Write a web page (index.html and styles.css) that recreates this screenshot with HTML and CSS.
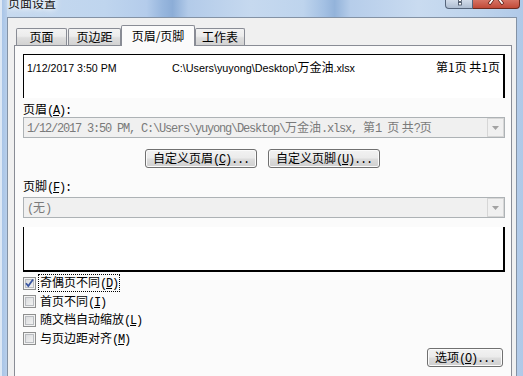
FILE: index.html
```html
<!DOCTYPE html>
<html lang="zh-CN">
<head>
<meta charset="utf-8">
<title>页面设置</title>
<link rel="stylesheet" href="styles.css">
</head>
<body>
<div class="window">
  <div class="titlebar">
    <span class="title">页面设置</span>
    <div class="caption-buttons">
      <span class="cap-btn help">
        <svg width="26" height="8" viewBox="0 0 26 8"><rect x="12.5" y="-1" width="3" height="2.5" fill="#fff" stroke="#3d4a5c" stroke-width="0.8"/><rect x="12.5" y="2.5" width="3" height="2.5" fill="#fff" stroke="#3d4a5c" stroke-width="0.8"/></svg>
      </span>
      <span class="cap-btn close">
        <svg width="46" height="8" viewBox="0 0 46 8"><path d="M20 -1 L17 3 M26 -1 L29 3" stroke="#5a1d14" stroke-width="3.2" stroke-linecap="square"/><path d="M20 -1 L17 3 M26 -1 L29 3" stroke="#fff" stroke-width="1.8" stroke-linecap="square"/></svg>
      </span>
    </div>
  </div>
  <div class="client">
    <div class="tabs">
      <div class="tab t1">页面</div>
      <div class="tab t2">页边距</div>
      <div class="tab t3 active">页眉/页脚</div>
      <div class="tab t4">工作表</div>
    </div>
    <div class="panel">
      <div class="preview preview-head">
        <span class="pv-left">1/12/2017 3:50 PM</span>
        <span class="pv-center">C:\Users\yuyong\Desktop\<span class="pv-cjk">万金油</span>.xlsx</span>
        <span class="pv-right">第1页 共1页</span>
      </div>
      <div class="field-label">页眉<span class="hw">(<u>A</u>):</span></div>
      <div class="combo combo-head">
        <span class="combo-text"><span class="mono">1/12/2017 3:50 PM, C:\Users\yuyong\Desktop\</span>万金油<span class="mono">.xlsx, </span>第<span class="mono">1 </span>页 共<span class="mono">?</span>页</span>
        <span class="combo-arrow"><svg width="7" height="4" viewBox="0 0 7 4"><path d="M0 0 H7 L3.5 4 Z" fill="#a2a2a2"/></svg></span>
      </div>
      <div class="btn-row">
        <button class="btn btn-wide">自定义页眉<span class="hw">(<u>C</u>)...</span></button>
        <button class="btn btn-wide">自定义页脚<span class="hw">(<u>U</u>)...</span></button>
      </div>
      <div class="field-label foot-label">页脚<span class="hw">(<u>F</u>):</span></div>
      <div class="combo">
        <span class="combo-text"><span class="mono">(</span>无<span class="mono">)</span></span>
        <span class="combo-arrow"><svg width="7" height="4" viewBox="0 0 7 4"><path d="M0 0 H7 L3.5 4 Z" fill="#a2a2a2"/></svg></span>
      </div>
      <div class="preview preview-foot"></div>
      <div class="checks">
        <div class="cb-row">
          <span class="cb"><svg width="11" height="11" viewBox="0 0 11 11"><path d="M2 5.2 L4.3 8 L9 1.5" fill="none" stroke="#3a56a2" stroke-width="1.8"/></svg></span>
          <span class="cb-label focus">奇偶页不同<span class="hw">(<u>D</u>)</span></span>
        </div>
        <div class="cb-row">
          <span class="cb"></span>
          <span class="cb-label">首页不同<span class="hw">(<u>I</u>)</span></span>
        </div>
        <div class="cb-row">
          <span class="cb"></span>
          <span class="cb-label">随文档自动缩放<span class="hw">(<u>L</u>)</span></span>
        </div>
        <div class="cb-row">
          <span class="cb"></span>
          <span class="cb-label">与页边距对齐<span class="hw">(<u>M</u>)</span></span>
        </div>
      </div>
      <div class="opt-row">
        <button class="btn btn-opt">选项<span class="hw">(<u>O</u>)...</span></button>
      </div>
    </div>
  </div>
</div>
</body>
</html>
```
FILE: styles.css
```css
* { box-sizing: border-box; }
html, body { margin: 0; padding: 0; }
body {
  width: 523px;
  height: 376px;
  overflow: hidden;
  font-family: "Noto Sans CJK SC", "Liberation Sans", sans-serif;
  font-size: 12px;
  color: #000;
}
.window {
  width: 523px;
  height: 376px;
  background:
    linear-gradient(to right, #dde8f5 0, #dde8f5 2px, #a9c5e7 2px, #b8cfeb 7px, rgba(0,0,0,0) 7px),
    linear-gradient(to right, #c7daef 0%, #bfd5ee 20%, #b4cceb 28%, #98b7de 31%, #8cadd7 33%, #b3cbe9 36%, #c6d9ef 48%, #bed4ed 58%, #a3c0e3 62%, #93b3da 64%, #b6cdea 67%, #c9dbf0 80%, #bdd3ec 92%, #b0c9e8 100%);
  display: flex;
  flex-direction: column;
}
.titlebar {
  height: 17px;
  display: flex;
  align-items: flex-start;
  flex: none;
}
.title {
  margin-left: 8px;
  margin-top: -4px;
  font-size: 12px;
  line-height: 14px;
  color: #111;
  text-shadow: 0 0 5px #fff, 0 0 8px #fff;
}
.caption-buttons {
  margin-left: auto;
  margin-right: 3px;
  display: flex;
}
.cap-btn {
  height: 9px;
  display: flex;
  overflow: hidden;
}
.help {
  width: 28px;
  background: linear-gradient(#d2dcea, #aebdd1);
  border: 1px solid #56657b;
  border-top: none;
  border-radius: 0 0 0 4px;
}
.close {
  width: 47px;
  background: linear-gradient(#d67364, #c14a38);
  border: 1px solid #6e2a1f;
  border-top: none;
  border-left: none;
  border-radius: 0 0 4px 0;
}
.client {
  margin-left: 7px;
  width: 510px;
  flex: 1;
  background: #f0f0f0;
  border: 1px solid #8392a5;
  border-bottom: none;
  padding-top: 7px;
}
.tabs {
  display: flex;
  align-items: flex-end;
  height: 20px;
  margin-left: 8px;
}
.tab {
  height: 17px;
  border: 1px solid #898c95;
  border-bottom: none;
  border-radius: 2px 2px 0 0;
  background: linear-gradient(#f3f3f3 0%, #ececec 45%, #dedede 55%, #d3d3d3 100%);
  text-align: center;
  line-height: 15px;
  font-size: 12px;
}
.t1 { width: 51px; margin-right: 1px; }
.t2 { width: 53px; }
.t3 { width: 74px; }
.t4 { width: 50px; }
.tab.active {
  height: 21px;
  margin-bottom: -1px;
  background: #fbfbfb;
  position: relative;
  z-index: 1;
  line-height: 16px;
  padding-top: 2px;
}
.panel {
  margin-left: 6px;
  width: 498px;
  height: 340px;
  border: 1px solid #898c95;
  background: #fbfbfb;
  padding: 8px 6px 0 8px;
}
.preview {
  background: #fff;
  border-left: 1px solid #000;
  border-right: 2px solid #000;
}
.preview-head {
  height: 44px;
  border-top: 1px solid #000;
  display: grid;
  grid-template-columns: 1fr auto 1fr;
  align-items: baseline;
  padding: 5px 3px 0 3px;
  line-height: 14px;
}
.pv-left {
  font-family: "Liberation Sans", sans-serif;
  font-size: 10.6px;
}
.pv-center {
  font-family: "Liberation Sans", sans-serif;
  font-size: 10.8px;
}
.pv-cjk {
  font-family: "Noto Sans CJK SC", sans-serif;
  font-size: 12px;
}
.pv-right {
  justify-self: end;
  font-size: 12px;
}
.field-label {
  margin-top: 3px;
  height: 16px;
  line-height: 16px;
}
.foot-label {
  margin-top: 10px;
}
.hw {
  font-family: "Liberation Mono", monospace;
  font-size: 12px;
  letter-spacing: -1.2px;
}
.hw u { text-underline-offset: 1px; }
.combo {
  margin-top: 3px;
  height: 21px;
  border: 1px solid #adb2b5;
  background: #f0f0f0;
  display: flex;
  align-items: center;
  padding-left: 3px;
  color: #7a7a7a;
}
.combo-head {
  margin-top: 0;
}
.combo-text {
  white-space: nowrap;
  overflow: hidden;
  flex: 1;
  line-height: 19px;
}
.mono {
  font-family: "Liberation Mono", monospace;
  font-size: 12px;
  letter-spacing: -1.2px;
}
.combo-arrow {
  width: 17px;
  height: 19px;
  border: 1px solid #d6d6d6;
  background: #f0f0f0;
  display: flex;
  align-items: center;
  justify-content: center;
}
.btn-row {
  margin-top: 11px;
  display: flex;
  justify-content: center;
  gap: 11px;
  padding-right: 3px;
}
.btn {
  height: 19px;
  padding: 0;
  border: 1px solid #707070;
  border-radius: 3px;
  background: linear-gradient(#f2f2f2 0%, #ebebeb 48%, #dddddd 52%, #cfcfcf 100%);
  box-shadow: inset 0 0 0 1px #fbfbfb;
  font-family: "Noto Sans CJK SC", sans-serif;
  font-size: 12px;
  line-height: 16px;
  color: #000;
  text-align: center;
}
.btn-wide { width: 112px; }
.btn-opt { width: 76px; }
.preview-foot {
  margin-top: 9px;
  height: 45px;
  border-bottom: 2px solid #000;
}
.checks {
  margin-top: 2px;
}
.cb-row {
  display: flex;
  align-items: center;
  height: 18.5px;
}
.cb {
  width: 13px;
  height: 13px;
  flex: none;
  border: 1px solid #8e8f8f;
  background: linear-gradient(135deg, #d4d6d9 0%, #e6e7e8 50%, #f7f7f7 100%);
  box-shadow: inset 0 0 0 1px #f2f2f2, inset 0 0 0 2px #b9bcc0;
  display: flex;
  align-items: center;
  justify-content: center;
}
.cb-label {
  margin-left: 2px;
  padding: 0 1px;
  border: 1px dotted transparent;
  line-height: 13px;
  white-space: nowrap;
}
.cb-label.focus {
  border-color: #000;
}
.opt-row {
  display: flex;
  justify-content: flex-end;
  padding-right: 2px;
}
```
